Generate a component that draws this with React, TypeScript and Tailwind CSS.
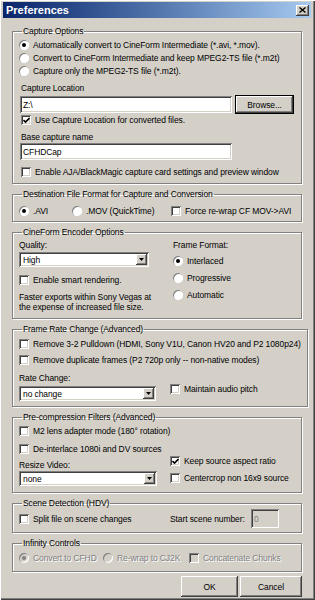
import React from 'react';

const sunken =
    'shadow-[inset_1px_1px_0_#808080,inset_-1px_-1px_0_#ffffff,inset_2px_2px_0_#404040,inset_-2px_-2px_0_#d4d0c8]';
const raised =
    'shadow-[inset_-1px_-1px_0_#404040,inset_1px_1px_0_#ffffff,inset_-2px_-2px_0_#808080]';

function Check({ checked, disabled }: { checked?: boolean; disabled?: boolean }) {
    return (
        <span
            className={`w-[10px] h-[10px] shrink-0 flex items-center justify-center ${sunken} ${disabled ? 'bg-[#d4d0c8]' : 'bg-white'}`}
        >
            {checked && (
                <svg width="7" height="7" viewBox="0 0 7 7">
                    <path d="M0.5 3 L2.5 5 L6.5 1" stroke="#000" strokeWidth="1.6" fill="none" />
                </svg>
            )}
        </span>
    );
}

function Radio({ checked, disabled }: { checked?: boolean; disabled?: boolean }) {
    return (
        <span
            className={`w-[10px] h-[10px] shrink-0 rounded-full flex items-center justify-center shadow-[inset_1px_1px_0_#808080,inset_-1px_-1px_0_#ffffff] ${disabled ? 'bg-[#d4d0c8]' : 'bg-white'}`}
        >
            {checked && <span className={`w-[4px] h-[4px] rounded-full ${disabled ? 'bg-[#808080]' : 'bg-black'}`} />}
        </span>
    );
}

function Option({
    label,
    type = 'check',
    checked,
    disabled,
    className = '',
}: {
    label: string;
    type?: 'check' | 'radio';
    checked?: boolean;
    disabled?: boolean;
    className?: string;
}) {
    return (
        <div className={`flex items-center gap-[4px] h-[12px] ${className}`}>
            {type === 'check' ? <Check checked={checked} disabled={disabled} /> : <Radio checked={checked} disabled={disabled} />}
            <span className={`whitespace-nowrap ${disabled ? 'text-[#808080] [text-shadow:1px_1px_0_#ffffff]' : ''}`}>{label}</span>
        </div>
    );
}

function Select({ value, className = '' }: { value: string; className?: string }) {
    return (
        <div className={`h-[15px] bg-white flex items-center p-[2px] ${sunken} ${className}`}>
            <span className="flex-1 pl-[2px]">{value}</span>
            <span className={`w-[11px] h-full bg-[#d4d0c8] flex items-center justify-center ${raised}`}>
                <svg width="5" height="3" viewBox="0 0 5 3">
                    <path d="M0 0 H5 L2.5 3 Z" fill="#000" />
                </svg>
            </span>
        </div>
    );
}

function Group({ title, children, className = '' }: { title: string; children: React.ReactNode; className?: string }) {
    return (
        <fieldset
            className={`border border-[#808080] shadow-[1px_1px_0_#ffffff,inset_1px_1px_0_#ffffff] px-[6px] ${className}`}
        >
            <legend className="ml-[3px] px-[1px] leading-[12px]">{title}</legend>
            {children}
        </fieldset>
    );
}

function Button({ label, className = '' }: { label: string; className?: string }) {
    return (
        <div className={`bg-[#d4d0c8] flex items-center justify-center ${raised} ${className}`}>{label}</div>
    );
}

export default function App() {
    return (
        <div className="w-[315px] h-[600px] bg-[#d4d0c8] text-[8.5px] tracking-[-0.1px] leading-[10px] text-black font-['Liberation_Sans',Arial,sans-serif] shadow-[inset_1px_1px_0_#ffffff,inset_-1px_-1px_0_#404040,inset_-2px_-2px_0_#808080] p-[2px] pr-[3px] flex flex-col">
            {/* Title bar */}
            <div className="h-[16px] mx-[1px] flex items-center justify-between bg-gradient-to-r from-[#0a246a] to-[#a6caf0] pl-[3px] pr-[2px]">
                <span className="text-white font-bold text-[11px] tracking-normal">Preferences</span>
                <span className={`w-[13px] h-[11px] bg-[#d4d0c8] flex items-center justify-center ${raised}`}>
                    <svg width="7" height="6" viewBox="0 0 7 6">
                        <path d="M0.5 0.5 L6.5 5.5 M6.5 0.5 L0.5 5.5" stroke="#000" strokeWidth="1.4" />
                    </svg>
                </span>
            </div>

            <div className="px-[10px] pt-[7px] flex flex-col gap-[4px]">
                {/* Capture Options */}
                <Group title="Capture Options" className="pb-[5px]">
                    <div className="flex flex-col pt-[1px]">
                        <Option type="radio" checked label="Automatically convert to CineForm Intermediate (*.avi, *.mov)." className="h-[13px]" />
                        <Option type="radio" label="Convert to CineForm Intermediate and keep MPEG2-TS file (*.m2t)" className="h-[13px]" />
                        <Option type="radio" label="Capture only the MPEG2-TS file (*.m2t)." className="h-[13px]" />
                    </div>
                    <div className="mt-[5px] pl-[2px] leading-[12px]">Capture Location</div>
                    <div className="mt-[2px] flex items-center gap-[4px] pl-[1px]">
                        <div className={`w-[212px] h-[17px] bg-white flex items-center pl-[3px] ${sunken}`}>Z:\</div>
                        <Button label="Browse..." className="w-[57px] h-[17px] outline outline-1 outline-black" />
                    </div>
                    <Option checked label="Use Capture Location for converted files." className="mt-[1px] pl-[2px]" />
                    <div className="mt-[5px] pl-[2px] leading-[12px]">Base capture name</div>
                    <div className={`ml-[1px] w-[212px] h-[17px] bg-white flex items-center pl-[3px] ${sunken}`}>CFHDCap</div>
                    <Option label="Enable AJA/BlackMagic capture card settings and preview window" className="mt-[6px] pl-[2px]" />
                </Group>

                {/* Destination */}
                <Group title="Destination File Format for Capture and Conversion" className="pb-[4px]">
                    <div className="flex items-center mt-[5px]">
                        <Option type="radio" checked label=".AVI" className="w-[53px]" />
                        <Option type="radio" label=".MOV (QuickTime)" className="w-[99px]" />
                        <Option label="Force re-wrap CF MOV->AVI" />
                    </div>
                </Group>

                {/* CineForm Encoder Options */}
                <Group title="CineForm Encoder Options" className="pb-[6px]">
                    <div className="flex">
                        <div className="w-[154px] flex flex-col">
                            <div className="leading-[12px] mt-[1px]">Quality:</div>
                            <Select value="High" className="w-[130px] mt-[1px]" />
                            <Option label="Enable smart rendering." className="mt-[7px]" />
                            <div className="mt-[6px]">
                                Faster exports within Sony Vegas at
                                <br />
                                the expense of increased file size.
                            </div>
                        </div>
                        <div className="flex flex-col">
                            <div className="leading-[12px] mt-[1px]">Frame Format:</div>
                            <Option type="radio" checked label="Interlaced" className="mt-[3px] h-[14px]" />
                            <Option type="radio" label="Progressive" className="mt-[3px] h-[14px]" />
                            <Option type="radio" label="Automatic" className="mt-[3px] h-[14px]" />
                        </div>
                    </div>
                </Group>

                {/* Frame Rate Change */}
                <Group title="Frame Rate Change (Advanced)" className="pb-[5px]">
                    <Option label="Remove 3-2 Pulldown (HDMI, Sony V1U, Canon HV20 and P2 1080p24)" className="mt-[3px]" />
                    <Option label="Remove duplicate frames (P2 720p only -- non-native modes)" className="mt-[4px]" />
                    <div className="flex items-start mt-[6px]">
                        <div className="w-[151px] flex flex-col">
                            <div className="leading-[12px]">Rate Change:</div>
                            <Select value="no change" className="w-[137px] mt-[2px]" />
                        </div>
                        <Option label="Maintain audio pitch" className="mt-[11px]" />
                    </div>
                </Group>

                {/* Pre-compression Filters */}
                <Group title="Pre-compression Filters (Advanced)" className="pb-[6px]">
                    <Option label="M2 lens adapter mode (180° rotation)" className="mt-[2px]" />
                    <Option label="De-interlace 1080i and DV sources" className="mt-[6px]" />
                    <div className="flex items-start">
                        <div className="w-[151px] flex flex-col mt-[4px]">
                            <div className="leading-[12px]">Resize Video:</div>
                            <Select value="none" className="w-[138px] mt-[0px]" />
                        </div>
                        <div className="flex flex-col">
                            <Option checked label="Keep source aspect ratio" />
                            <Option label="Centercrop non 16x9 source" className="mt-[5px]" />
                        </div>
                    </div>
                </Group>

                {/* Scene Detection */}
                <Group title="Scene Detection (HDV)" className="pb-[4px]">
                    <div className="flex items-center">
                        <div className="w-[151px]">
                            <Option label="Split file on scene changes" />
                        </div>
                        <span className="w-[77px]">Start scene number:</span>
                        <div className={`ml-[4px] w-[28px] h-[19px] bg-[#d4d0c8] flex items-center pl-[3px] text-[#808080] ${sunken}`}>0</div>
                    </div>
                </Group>

                {/* Infinity Controls */}
                <Group title="Infinity Controls" className="pb-[7px]">
                    <div className="flex items-center mt-[3px]">
                        <Option type="radio" checked disabled label="Convert to CFHD" className="w-[84px]" />
                        <Option type="radio" disabled label="Re-wrap to CJ2K" className="w-[86px]" />
                        <Option disabled label="Concatenate Chunks" />
                    </div>
                </Group>

                <div className="flex justify-end gap-[2px] mt-[0px]">
                    <Button label="OK" className="w-[57px] h-[21px]" />
                    <Button label="Cancel" className="w-[62px] h-[21px]" />
                </div>
            </div>
        </div>
    );
}
